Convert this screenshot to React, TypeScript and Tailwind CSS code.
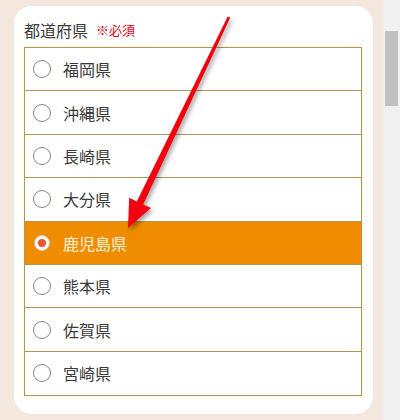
import React, { useState } from "react";

const prefectures = ["福岡県", "沖縄県", "長崎県", "大分県", "鹿児島県", "熊本県", "佐賀県", "宮崎県"];

const font = { fontFamily: '"Noto Sans CJK JP", "Noto Sans", sans-serif' };

const Radio = ({ checked }: { checked: boolean }) =>
  checked ? (
    <span className="flex h-[16px] w-[16px] items-center justify-center rounded-full border border-[#d9c8b0] bg-white">
      <span className="h-[8px] w-[8px] rounded-full bg-[#e8582a]" />
    </span>
  ) : (
    <span className="h-[18px] w-[18px] rounded-full border border-[#858585] bg-white" />
  );

export default function App() {
  const [selected, setSelected] = useState("鹿児島県");

  return (
    <div className="relative flex h-[420px] w-[400px] overflow-hidden bg-[#f3e7de]" style={font}>
      <div className="flex-1 pb-[6px] pl-[14px] pr-[10px] pt-[6px]">
        <div className="h-full rounded-[18px] bg-white px-[10px] pb-[20px] pr-[11px] pt-[12px]">
          <div className="mb-[5px] flex h-[24px] items-center gap-[8px]">
            <span className="text-[16px] text-[#3a3a3a]">都道府県</span>
            <span className="text-[13px] text-[#e0001a]">※必須</span>
          </div>
          <ul className="border border-[#b09652] shadow-[0_0_3px_#fff1b8]">
            {prefectures.map((p, i) => {
              const on = p === selected;
              return (
                <li
                  key={p}
                  onClick={() => setSelected(p)}
                  className={`flex h-[43.4px] cursor-pointer items-center gap-[12px] pl-[8px] ${
                    i < prefectures.length - 1 ? "border-b border-[#b09652]" : ""
                  } ${on ? "bg-[#ef8c00] text-[#fff3d8]" : "bg-white text-[#3a3a3a]"}`}
                >
                  <span className="flex w-[18px] justify-center">
                    <Radio checked={on} />
                  </span>
                  <span className="text-[16px]">{p}</span>
                </li>
              );
            })}
          </ul>
        </div>
      </div>
      <div className="w-[17px] bg-[#f1f1f1] pl-[2px] pr-[2px] pt-[31px]">
        <div className="h-[75px] w-[13px] bg-[#c1c1c1]" />
      </div>

      <svg className="pointer-events-none absolute left-0 top-0" width="400" height="420">
        <defs>
          <filter id="sh" x="-20%" y="-20%" width="140%" height="140%">
            <feDropShadow dx="2" dy="3" stdDeviation="2" floodColor="#000" floodOpacity="0.35" />
          </filter>
        </defs>
        <polygon
          points="128,228 151,208 143.2,204.5 230.3,17.5 227.7,16.5 136.8,201.5 129.2,197.8"
          fill="#f2000f"
          filter="url(#sh)"
        />
      </svg>
    </div>
  );
}
